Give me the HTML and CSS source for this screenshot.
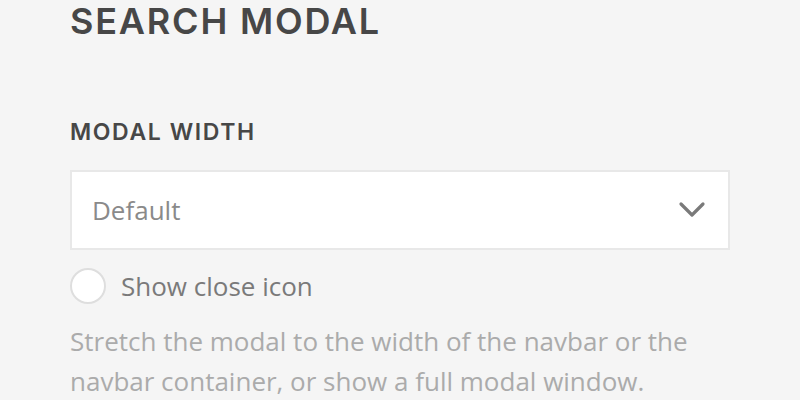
FILE: index.html
```html
<!DOCTYPE html>
<html>
<head>
<meta charset="utf-8">
<link rel="stylesheet" href="styles.css">
</head>
<body>
<div class="panel">
  <h1 class="title">SEARCH MODAL</h1>
  <h2 class="label">MODAL WIDTH</h2>
  <div class="select">
    <span class="select-value">Default</span>
    <svg class="chevron" width="28" height="18" viewBox="0 0 28 18"><path d="M3 3 L14 14 L25 3" fill="none" stroke="#7a7a7a" stroke-width="3.2" stroke-linecap="round" stroke-linejoin="round"/></svg>
  </div>
  <label class="check">
    <span class="radio"></span>
    <span class="check-text">Show close icon</span>
  </label>
  <p class="help">Stretch the modal to the width of the navbar or the navbar container, or show a full modal window.</p>
</div>
</body>
</html>
```
FILE: styles.css
```css
html, body {
  margin: 0;
  padding: 0;
  background: #f5f5f5;
}
.panel {
  width: 660px;
  padding: 0 0 0 70px;
  font-family: "Open Sans", sans-serif;
}
.title {
  margin: 0;
  padding-top: 1px;
  font-family: Inter, sans-serif;
  font-weight: 600;
  font-size: 36px;
  line-height: 40px;
  color: #474747;
  letter-spacing: 1.8px;
}
.label {
  margin: 78px 0 0 0;
  font-family: Inter, sans-serif;
  font-weight: 600;
  font-size: 23px;
  line-height: 26px;
  color: #474747;
  letter-spacing: 1.6px;
}
.select {
  margin-top: 25px;
  box-sizing: border-box;
  width: 660px;
  height: 80px;
  background: #fff;
  border: 2px solid #e8e8e8;
  display: flex;
  align-items: center;
  justify-content: space-between;
  padding: 0 22px 0 20px;
}
.select-value {
  font-size: 26px;
  color: #8a8a8a;
}
.chevron {
  display: block;
}
.check {
  display: flex;
  align-items: center;
  gap: 15px;
  margin-top: 18px;
}
.radio {
  box-sizing: border-box;
  width: 36px;
  height: 36px;
  border-radius: 50%;
  border: 2px solid #dedede;
  background: #fff;
}
.check-text {
  font-size: 26px;
  color: #7a7a7a;
}
.help {
  margin: 17px 0 0 0;
  font-size: 26px;
  line-height: 40px;
  color: #ababab;
}
```
